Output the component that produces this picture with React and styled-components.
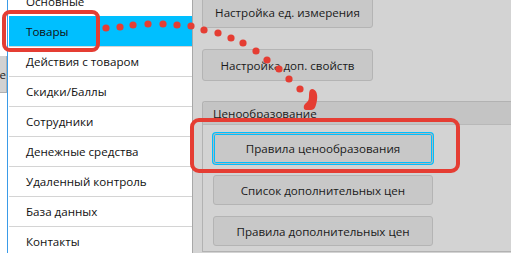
import React from "react";
import styled, { createGlobalStyle } from "styled-components";

const GlobalStyle = createGlobalStyle`
    html, body {
        margin: 0;
        padding: 0;
        background: #ffffff;
    }
    body {
        font-family: "Open Sans", "Noto Sans", sans-serif;
        font-size: 11.6px;
        color: #1a1a1a;
    }
`;

const Screen = styled.div`
    position: relative;
    display: flex;
    width: 511px;
    height: 253px;
    overflow: hidden;
`;

const Strip = styled.div`
    width: 7px;
    flex: none;
    background: #ffffff;
`;

const StubButton = styled.div`
    margin-top: 56px;
    height: 36px;
    background: #d2d2d2;
    border-right: 1px solid #b0b0b0;
    border-bottom: 1px solid #b0b0b0;
    display: flex;
    align-items: center;
    justify-content: flex-end;
    overflow: hidden;
    font-size: 11.6px;
    color: #222;
`;

const List = styled.div`
    width: 184px;
    flex: none;
    background: #ffffff;
    border-left: 1px solid #3a9be8;
    border-right: 1px solid #a8a8a8;
    margin-top: -14px;
`;

const Row = styled.div`
    height: 29px;
    border-top: 1px solid ${p => (p.selected ? "#00bfff" : "#d4d4d4")};
    margin-left: 1px;
    background: ${p => (p.selected ? "#00bfff" : "#ffffff")};
    display: flex;
    align-items: center;
    padding-left: 17px;
    font-size: 11.6px;
    color: #111;
    white-space: nowrap;
`;

const Panel = styled.div`
    flex: 1;
    background: #d3d3d3;
    padding-left: 9px;
    display: flex;
    flex-direction: column;
`;

const Button = styled.div`
    box-sizing: border-box;
    width: ${p => p.w}px;
    height: ${p => p.h || 30}px;
    background: #c8c8c8;
    border: 1px solid #b4b4b4;
    border-radius: 3px;
    display: flex;
    align-items: center;
    justify-content: center;
    font-size: 11.6px;
    color: #1a1a1a;
    white-space: nowrap;
    box-shadow: ${p => (p.focused ? "0 0 0 1px #00bfff, inset 0 0 0 1px #00bfff" : "none")};
`;

const TopButtons = styled.div`
    display: flex;
    flex-direction: column;
    gap: 21px;
    margin-top: -4px;
`;

const Pane = styled.div`
    margin-top: 20px;
    border: 1px solid #b2b2b2;
    border-right: none;
    border-radius: 3px 0 0 0;
    display: flex;
    flex-direction: column;
    flex: 1;
    margin-bottom: 1px;
`;

const PaneTitle = styled.div`
    height: 22px;
    background: #c4c4c4;
    border-bottom: 1px solid #b8b8b8;
    display: flex;
    align-items: center;
    padding-left: 10px;
    font-size: 11.6px;
    color: #1a1a1a;
    border-radius: 3px 0 0 0;
`;

const PaneBody = styled.div`
    display: flex;
    flex-direction: column;
    gap: 11px;
    padding: 8px 0 0 10px;
`;

const Overlay = styled.svg`
    position: absolute;
    left: 0;
    top: 0;
    pointer-events: none;
`;

const menu = [
    "Основные",
    "Товары",
    "Действия с товаром",
    "Скидки/Баллы",
    "Сотрудники",
    "Денежные средства",
    "Удаленный контроль",
    "База данных",
    "Контакты",
];

const dots = [
    [106, 28], [120, 27], [133, 25], [148, 24], [163, 24], [177, 25], [191, 26],
    [204, 30], [218, 33], [231, 38], [243, 43], [256, 51], [267, 60], [279, 69],
    [289, 79], [300, 89],
];

const RED = "#e53d33";

const App = () => {
    return (
        <>
            <GlobalStyle />
            <Screen>
                <Strip>
                    <StubButton>е</StubButton>
                </Strip>
                <List>
                    {menu.map((item, i) => (
                        <Row key={item} selected={i === 1}>{item}</Row>
                    ))}
                </List>
                <Panel>
                    <TopButtons>
                        <Button w={171} h={32}>Настройка ед. измерения</Button>
                        <Button w={171} h={32}>Настройка доп. свойств</Button>
                    </TopButtons>
                    <Pane>
                        <PaneTitle>Ценообразование</PaneTitle>
                        <PaneBody>
                            <Button w={220} h={31} focused>Правила ценообразования</Button>
                            <Button w={220}>Список дополнительных цен</Button>
                            <Button w={220}>Правила дополнительных цен</Button>
                        </PaneBody>
                    </Pane>
                </Panel>
                <Overlay width="511" height="253" viewBox="0 0 511 253">
                    <rect x="4" y="12" width="94" height="38" rx="6" fill="none" stroke={RED} strokeWidth="4" />
                    <rect x="192" y="120" width="266" height="51" rx="7" fill="none" stroke={RED} strokeWidth="4" />
                    {dots.map(([x, y]) => (
                        <circle key={`${x}-${y}`} cx={x} cy={y} r="3.6" fill={RED} />
                    ))}
                    <path
                        d="M312 89 C316 89 318 94 317 100 C316 106 315 110 311 110 L306 110 C303 110 303 105 306 103 C309 101 309 98 309 95 C309 91 310 89 312 89 Z"
                        fill={RED}
                    />
                </Overlay>
            </Screen>
        </>
    );
};

export default App;
